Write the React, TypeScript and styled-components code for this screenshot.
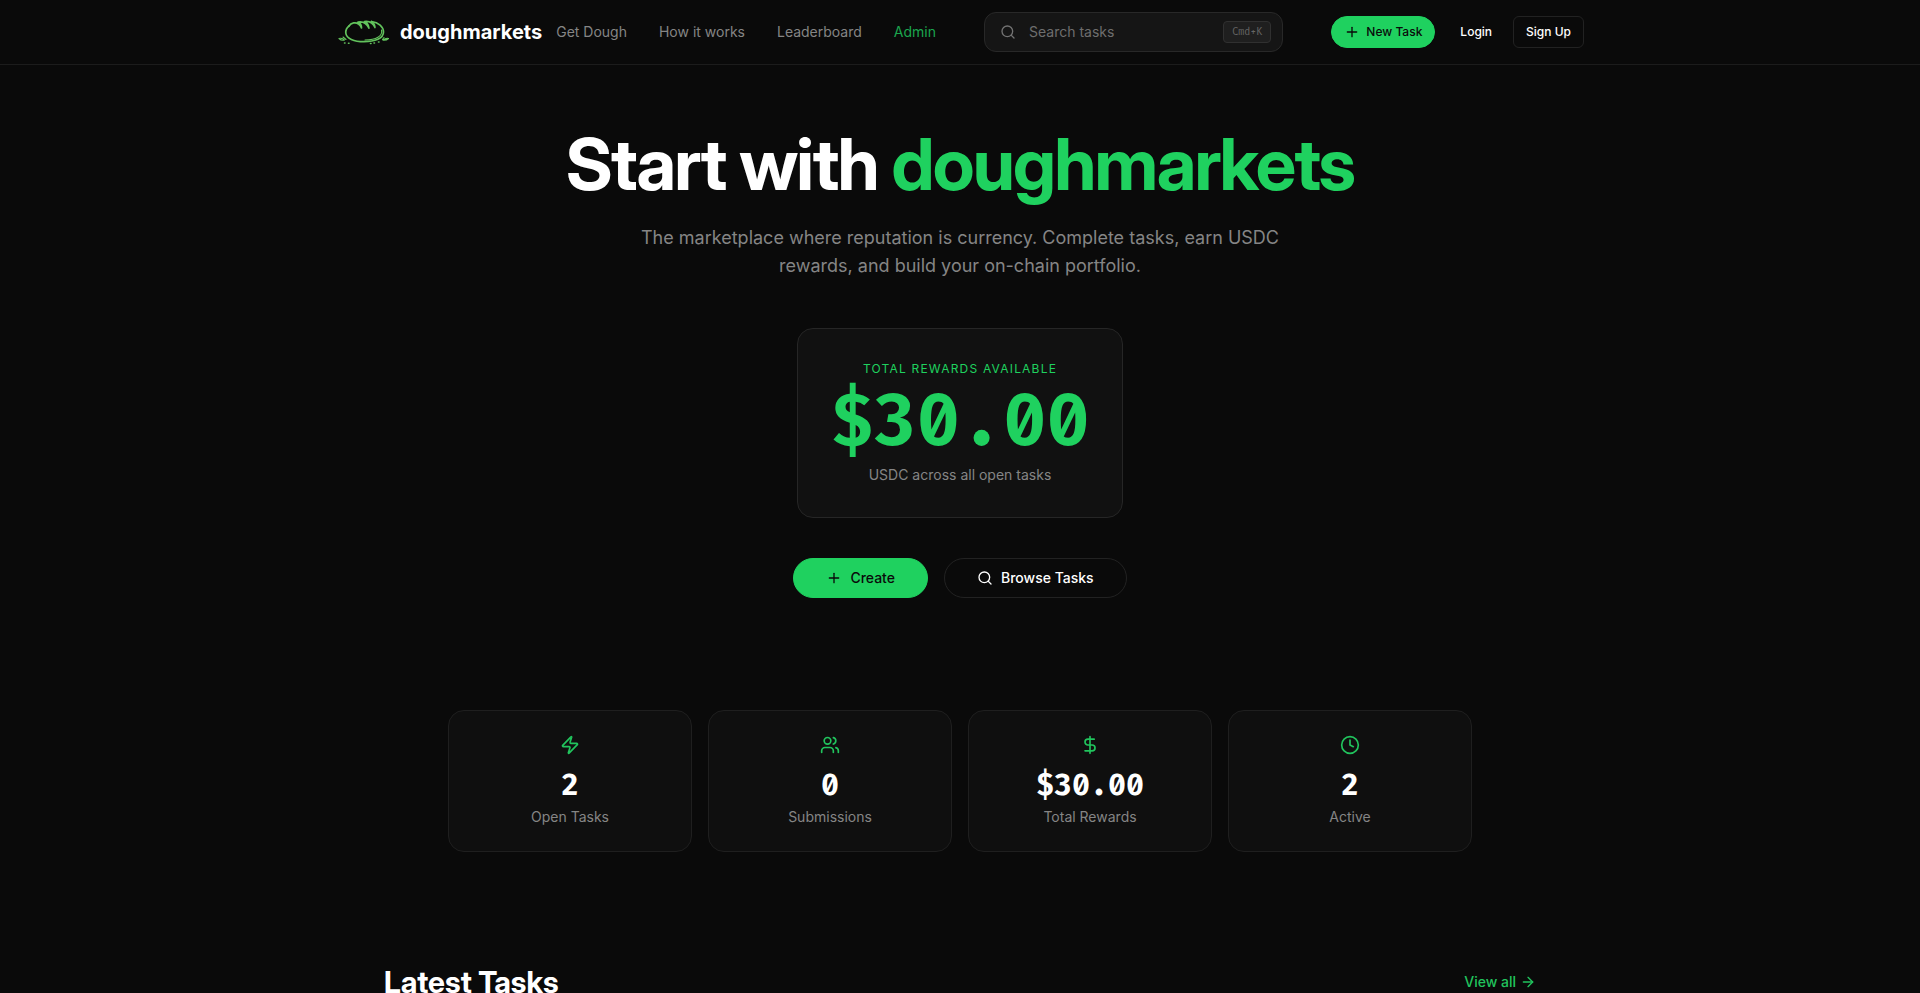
import React from "react";
import styled, { createGlobalStyle, css } from "styled-components";
import { ArrowRight, Clock, DollarSign, Plus, Search, Users, Zap } from "lucide-react";

const green = "#1fd15f";
const muted = "#858585";
const mono = '"Fira Mono", "Fira Code", "Noto Sans Mono", monospace';
const display = '"Inter Display", Inter, "Liberation Sans", sans-serif';

const GlobalStyle = createGlobalStyle`
  *, *::before, *::after { box-sizing: border-box; }
  body {
    margin: 0;
    background: #0a0a0a;
    color: #fff;
    font-family: Inter, "Liberation Sans", sans-serif;
    font-size: 14px;
    line-height: 20px;
    -webkit-font-smoothing: antialiased;
  }
  h1, h2, p { margin: 0; }
  a { color: inherit; text-decoration: none; }
  button, input { font: inherit; color: inherit; }
`;

const Page = styled.div`
  height: 100vh;
  overflow: hidden;
`;

const Header = styled.header`
  border-bottom: 1px solid #1c1c1c;
`;

const HeaderInner = styled.div`
  display: flex;
  align-items: center;
  max-width: 1280px;
  height: 64px;
  margin: 0 auto;
  padding: 0 16px;
`;

const Brand = styled.a`
  display: flex;
  align-items: center;
  gap: 8px;
  margin-right: 14px;
  font-size: 20px;
  line-height: 28px;
  font-weight: 700;
`;

const Nav = styled.nav`
  display: flex;
  gap: 32px;
`;

const NavLink = styled.a<{ $accent?: boolean }>`
  color: ${(p) => (p.$accent ? "#1ba64e" : muted)};
  white-space: nowrap;
`;

const SearchBox = styled.label`
  display: flex;
  flex: 1;
  align-items: center;
  gap: 13px;
  min-width: 0;
  height: 40px;
  margin: 0 48px;
  padding: 0 11px 0 15px;
  border: 1px solid #282828;
  border-radius: 12px;
  background: #151515;
  color: #737373;
`;

const SearchInput = styled.input`
  flex: 1;
  min-width: 0;
  padding: 0;
  border: 0;
  outline: 0;
  background: transparent;
  &::placeholder { color: #6e6e6e; opacity: 1; }
`;

const Shortcut = styled.kbd`
  padding: 2px 8px;
  border: 1px solid #303030;
  border-radius: 4px;
  background: #1f1f1f;
  color: #666;
  font-family: ${mono};
  font-size: 10px;
  line-height: 16px;
`;

const Actions = styled.div<{ $gap: number }>`
  display: flex;
  flex-shrink: 0;
  align-items: center;
  justify-content: center;
  gap: ${(p) => p.$gap}px;
`;

const Button = styled.button<{ $kind: "primary" | "outline" | "ghost"; $large?: boolean; $pill?: boolean }>`
  display: flex;
  align-items: center;
  gap: ${(p) => (p.$large ? 8 : 6)}px;
  height: ${(p) => (p.$large ? 40 : 32)}px;
  padding: 0 ${(p) => (p.$large ? 32 : 12)}px;
  border: 1px solid transparent;
  border-radius: ${(p) => (p.$pill ? 20 : 6)}px;
  background: transparent;
  font-size: ${(p) => (p.$large ? 14 : 12)}px;
  font-weight: 500;
  white-space: nowrap;
  cursor: pointer;
  ${(p) => p.$kind === "primary" && css`
    background: ${green};
    border-color: ${green};
    color: #0a0a0a;
  `}
  ${(p) => p.$kind === "outline" && css`
    border-color: #222;
  `}
`;

const Hero = styled.section`
  display: flex;
  flex-direction: column;
  align-items: center;
  padding: 63px 16px 64px;
  text-align: center;
`;

const Title = styled.h1`
  font-family: ${display};
  font-size: 72px;
  line-height: 72px;
  font-weight: 700;
  letter-spacing: -0.025em;
`;

const Accent = styled.span`
  color: ${green};
`;

const Lead = styled.p`
  max-width: 672px;
  margin: 24px 0 48px;
  color: ${muted};
  font-size: 18px;
  line-height: 28px;
`;

const RewardCard = styled.div`
  margin-bottom: 40px;
  padding: 32px;
  border: 1px solid #262626;
  border-radius: 16px;
  background: #111;
  color: ${muted};
`;

const Eyebrow = styled.p`
  color: ${green};
  font-size: 12px;
  line-height: 16px;
  letter-spacing: 0.1em;
  text-transform: uppercase;
`;

const Amount = styled.p`
  margin: 8px 0;
  color: ${green};
  font-family: ${mono};
  font-size: 72px;
  line-height: 72px;
  font-weight: 700;
  font-variant-numeric: slashed-zero;
`;

const Stats = styled.section`
  display: grid;
  grid-template-columns: repeat(4, 1fr);
  gap: 16px;
  max-width: 1024px;
  margin: 48px auto 112px;
`;

const StatCard = styled.div`
  display: flex;
  flex-direction: column;
  align-items: center;
  padding: 24px;
  border: 1px solid #1f1f1f;
  border-radius: 16px;
  background: #0f0f0f;
  color: ${muted};
  svg { color: #21c45d; }
`;

const StatValue = styled.strong`
  margin: 12px 0 4px;
  color: #fff;
  font-family: ${mono};
  font-size: 30px;
  line-height: 36px;
  font-weight: 700;
  font-variant-numeric: slashed-zero;
`;

const Latest = styled.section`
  display: flex;
  align-items: center;
  justify-content: space-between;
  max-width: 1152px;
  margin: 0 auto;
`;

const SectionTitle = styled.h2`
  font-family: ${display};
  font-size: 30px;
  line-height: 36px;
  font-weight: 700;
`;

const ViewAll = styled.a`
  display: flex;
  align-items: center;
  gap: 4px;
  color: #21c45d;
  font-weight: 500;
`;

const Logo = () => (
  <svg width="56" height="32" viewBox="0 0 56 32" fill="none" stroke="#62c25c" strokeLinecap="round" strokeLinejoin="round" aria-hidden="true">
    <path d="M13 10C10.500 12 9.600 14.500 9.800 17C10.300 22.500 18 25.700 28 25.700C39 25.700 47.500 22.500 47.500 16C47.500 10.500 42.500 6.500 35.500 5.500" strokeWidth="1.700" />
    <path d="M13 10C15 6.500 20 6 22.500 8C24 9 25 10.500 25.500 12C25.500 9 24.500 7 22 6C26.500 5.200 30.500 7 33 12C32.500 8.500 31 6.500 28.500 5.500C33 5 37 6.500 39 11.500C38.500 8 37.500 6.500 35.500 5.500" strokeWidth="1.700" />
    <path d="M45.500 14C47 20 40 23.800 29 24" strokeWidth="1.100" />
    <path d="M3 22.500C5 22 7 22.300 8.500 24C6.500 24.500 4.500 24 3 22.500M7 21L10 23.500M52.500 22.500C50.500 22 48.500 22.800 47 24.200C49 24.500 51 24 52.500 22.500M48 21.500L46.500 23.500" strokeWidth="1.100" />
    <path d="M8.500 27H9M12.500 27.200H13M34.500 27.500H35M38 27H38.500M42.500 26H43" strokeWidth="1.600" />
  </svg>
);

const stats = [
  { icon: Zap, value: "2", label: "Open Tasks" },
  { icon: Users, value: "0", label: "Submissions" },
  { icon: DollarSign, value: "$30.00", label: "Total Rewards" },
  { icon: Clock, value: "2", label: "Active" },
];

export default function App() {
  return (
    <Page>
      <GlobalStyle />
      <Header>
        <HeaderInner>
          <Brand href="#"><Logo />doughmarkets</Brand>
          <Nav>
            <NavLink href="#">Get Dough</NavLink>
            <NavLink href="#">How it works</NavLink>
            <NavLink href="#">Leaderboard</NavLink>
            <NavLink href="#" $accent>Admin</NavLink>
          </Nav>
          <SearchBox>
            <Search size={16} />
            <SearchInput type="text" placeholder="Search tasks" aria-label="Search tasks" />
            <Shortcut>Cmd+K</Shortcut>
          </SearchBox>
          <Actions $gap={12}>
            <Button $kind="primary" $pill><Plus size={16} />New Task</Button>
            <Actions $gap={8}>
              <Button $kind="ghost">Login</Button>
              <Button $kind="outline">Sign Up</Button>
            </Actions>
          </Actions>
        </HeaderInner>
      </Header>
      <main>
        <Hero>
          <Title>Start with <Accent>doughmarkets</Accent></Title>
          <Lead>
            The marketplace where reputation is currency. Complete tasks, earn USDC rewards, and build your on-chain portfolio.
          </Lead>
          <RewardCard>
            <Eyebrow>Total Rewards Available</Eyebrow>
            <Amount>$30.00</Amount>
            <p>USDC across all open tasks</p>
          </RewardCard>
          <Actions $gap={16}>
            <Button $kind="primary" $large $pill><Plus size={16} />Create</Button>
            <Button $kind="outline" $large $pill><Search size={16} />Browse Tasks</Button>
          </Actions>
        </Hero>
        <Stats>
          {stats.map(({ icon: Icon, value, label }) => (
            <StatCard key={label}>
              <Icon size={20} />
              <StatValue>{value}</StatValue>
              <span>{label}</span>
            </StatCard>
          ))}
        </Stats>
        <Latest>
          <SectionTitle>Latest Tasks</SectionTitle>
          <ViewAll href="#">View all<ArrowRight size={16} /></ViewAll>
        </Latest>
      </main>
    </Page>
  );
}
